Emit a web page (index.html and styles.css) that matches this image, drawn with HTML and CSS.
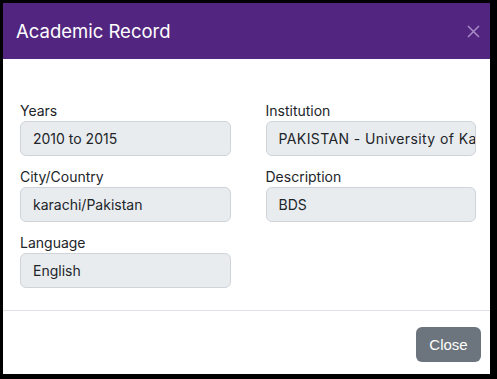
FILE: index.html
```html
<!DOCTYPE html>
<html lang="en">
<head>
<meta charset="utf-8">
<title>Academic Record</title>
<link rel="stylesheet" href="styles.css">
</head>
<body>
<div class="modal">
  <div class="modal-header">
    <h5 class="modal-title">Academic Record</h5>
    <button class="btn-close" type="button" aria-label="Close">
      <svg width="13" height="13" viewBox="0 0 13 13"><path d="M1 1L12 12M12 1L1 12" stroke="currentColor" stroke-width="1.5" fill="none"/></svg>
    </button>
  </div>
  <div class="modal-body">
    <div class="field">
      <label class="field-label">Years</label>
      <div class="field-input">2010 to 2015</div>
    </div>
    <div class="field">
      <label class="field-label">Institution</label>
      <div class="field-input field-input-long">PAKISTAN - University of Karachi</div>
    </div>
    <div class="field">
      <label class="field-label">City/Country</label>
      <div class="field-input">karachi/Pakistan</div>
    </div>
    <div class="field">
      <label class="field-label">Description</label>
      <div class="field-input">BDS</div>
    </div>
    <div class="field">
      <label class="field-label">Language</label>
      <div class="field-input">English</div>
    </div>
  </div>
  <div class="modal-footer">
    <button class="btn-secondary" type="button">Close</button>
  </div>
</div>
</body>
</html>
```
FILE: styles.css
```css
* { box-sizing: border-box; }
html, body { margin: 0; padding: 0; }
body {
  background: #000;
  font-family: Inter, "Open Sans", sans-serif;
  color: #212529;
}
.modal {
  margin: 3px 0 0 3px;
  width: 487px;
  height: 371px;
  background: #fff;
  display: flex;
  flex-direction: column;
}
.modal-header {
  height: 56px;
  background: #522680;
  display: flex;
  align-items: center;
  justify-content: space-between;
  padding: 0 9px 0 13px;
}
.modal-title {
  margin: 0;
  font-size: 18.5px;
  font-weight: 400;
  color: #fff;
  line-height: 1;
}
.btn-close {
  background: none;
  border: 0;
  padding: 0;
  width: 13px;
  height: 13px;
  color: #a98cc7;
  display: flex;
  margin-right: 1px;
}
.modal-body {
  display: grid;
  grid-template-columns: minmax(0, 1fr) minmax(0, 1fr);
  column-gap: 35px;
  row-gap: 10px;
  padding: 41px 14px 21px 17px;
}
.field { display: flex; flex-direction: column; min-width: 0; }
.field-label {
  font-size: 14px;
  line-height: 21px;
  color: #212529;
}
.field-input {
  height: 35px;
  background: #e9ecef;
  border: 1px solid #ced4da;
  border-radius: 6px;
  padding: 0 0 0 12px;
  font-size: 14px;
  line-height: 33px;
  white-space: nowrap;
  overflow: hidden;
}
.field-input-long { letter-spacing: 0.4px; }
.modal-footer {
  border-top: 1px solid #dee2e6;
  margin-top: auto;
  padding: 16px 9px 12px;
  display: flex;
  justify-content: flex-end;
}
.btn-secondary {
  width: 65px;
  height: 35px;
  background: #6c757d;
  color: #fff;
  border: 0;
  border-radius: 6px;
  font-family: "Liberation Sans", Arial, sans-serif;
  font-size: 15px;
  padding: 0;
}
```
